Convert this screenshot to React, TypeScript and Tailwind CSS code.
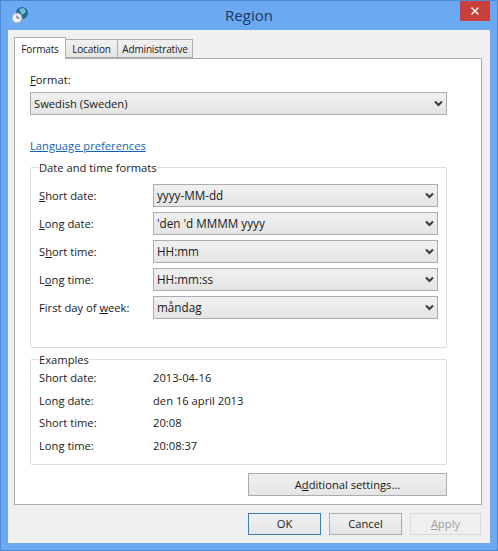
import { X } from "lucide-react";
import type { ReactNode } from "react";

const font = "font-['Open_Sans','Noto_Sans',sans-serif]";

function Chevron() {
  return (
    <svg width="9" height="7" viewBox="0 0 9 7" className="text-[#3a3a3a]">
      <path d="M1 1.5 L4.5 5 L8 1.5" fill="none" stroke="currentColor" strokeWidth="2" />
    </svg>
  );
}

function Select({ value, className }: { value: string; className: string }) {
  return (
    <div className={`flex h-[23px] items-center justify-between border border-[#acacac] bg-gradient-to-b from-[#f0f0f0] to-[#e5e5e5] pl-[3px] pr-[3px] ${className}`}>
      <span>{value}</span>
      <Chevron />
    </div>
  );
}

function Row({ label, value }: { label: ReactNode; value: string }) {
  return (
    <div className="flex h-[23px] items-center">
      <div className="w-[114px] shrink-0">{label}</div>
      <Select value={value} className="w-[285px] text-[11.7px]" />
    </div>
  );
}

function Example({ label, value }: { label: string; value: string }) {
  return (
    <div className="flex h-[22.5px] items-center">
      <div className="w-[114px] shrink-0">{label}</div>
      <div>{value}</div>
    </div>
  );
}

function Tab({ label, className, active }: { label: string; className: string; active?: boolean }) {
  if (active) {
    return (
      <div className={`relative z-10 -mb-px flex h-[22px] items-center justify-center border border-b-0 border-[#acacac] bg-white ${className}`}>
        {label}
      </div>
    );
  }
  return (
    <div className={`-ml-px flex h-[19px] items-center justify-center border border-[#acacac] bg-gradient-to-b from-[#f0f0f0] to-[#e5e5e5] ${className}`}>
      {label}
    </div>
  );
}

function Button({ children, className }: { children: ReactNode; className: string }) {
  return (
    <div className={`flex items-center justify-center border ${className}`}>{children}</div>
  );
}

export default function App() {
  return (
    <div className={`${font} h-[551px] w-[498px] overflow-hidden border border-[#4d8ad6] bg-[#6ba9f2] text-[11.2px] leading-none text-[#1a1a1a]`}>
      <div className="relative flex h-[29px] items-center justify-center text-[15px] text-[#1d3a63]">
        <svg width="20" height="20" viewBox="0 0 20 20" className="absolute left-[9px] top-[4px]">
          <circle cx="12" cy="8" r="6" fill="#1f6a8f" />
          <path d="M9 4 L14 3 L16 7 L12 10 Z" fill="#6fc3d8" />
          <circle cx="7" cy="13" r="5" fill="#f1f1f1" stroke="#9aa5ad" />
          <path d="M7 10.5 V13 H9.5" fill="none" stroke="#4a5560" />
        </svg>
        <span>Region</span>
        <div className="absolute right-[7px] top-0 flex h-[20px] w-[30px] items-center justify-center bg-[#c9403a] text-white">
          <X size={12} strokeWidth={3} />
        </div>
      </div>
      <div className="mx-[7px] h-[513px] bg-[#f0f0f0] px-[6px] pt-[8px]">
        <div className="flex h-[20px] items-end text-[10px] tracking-[-0.15px]">
          <Tab label="Formats" className="w-[52px]" active />
          <Tab label="Location" className="w-[53px]" />
          <Tab label="Administrative" className="w-[76px]" />
        </div>
        <div className="h-[447px] w-[468px] border border-[#acacac] bg-white pl-[15px] pt-[15px]">
          <div className="h-[18px]"><u>F</u>ormat:</div>
          <Select value="Swedish (Sweden)" className="w-[417px]" />
          <div className="mt-[25px] text-[#0f66b0] underline">Language preferences</div>
          <fieldset className="mt-[11px] h-[186px] w-[417px] rounded-[2px] border border-[#dcdcdc] pl-[8px] pt-[11px]">
            <legend className="px-0">Date and time formats</legend>
            <div className="flex flex-col gap-[5px]">
              <Row label={<><u>S</u>hort date:</>} value="yyyy-MM-dd" />
              <Row label={<><u>L</u>ong date:</>} value="'den 'd MMMM yyyy" />
              <Row label={<>S<u>h</u>ort time:</>} value="HH:mm" />
              <Row label={<>L<u>o</u>ng time:</>} value="HH:mm:ss" />
              <Row label={<>First day of <u>w</u>eek:</>} value="måndag" />
            </div>
          </fieldset>
          <fieldset className="mt-[6px] h-[111px] w-[417px] rounded-[2px] border border-[#dcdcdc] pl-[8px] pt-[1px]">
            <legend className="px-0">Examples</legend>
            <Example label="Short date:" value="2013-04-16" />
            <Example label="Long date:" value="den 16 april 2013" />
            <Example label="Short time:" value="20:08" />
            <Example label="Long time:" value="20:08:37" />
          </fieldset>
          <div className="mt-[8px] flex w-[417px] justify-end">
            <Button className="h-[23px] w-[199px] border-[#acacac] bg-gradient-to-b from-[#f0f0f0] to-[#e5e5e5]">
              <span>A<u>d</u>ditional settings...</span>
            </Button>
          </div>
        </div>
        <div className="mt-[8px] flex w-[467px] justify-end gap-[8px]">
          <Button className="h-[22px] w-[73px] border-[#3c7fb1] bg-gradient-to-b from-[#f0f0f0] to-[#e5e5e5]">OK</Button>
          <Button className="h-[22px] w-[73px] border-[#acacac] bg-gradient-to-b from-[#f0f0f0] to-[#e5e5e5]">Cancel</Button>
          <Button className="h-[22px] w-[71px] border-[#d9d9d9] bg-[#efefef] text-[#a0a0a0]"><u>A</u>pply</Button>
        </div>
      </div>
    </div>
  );
}
